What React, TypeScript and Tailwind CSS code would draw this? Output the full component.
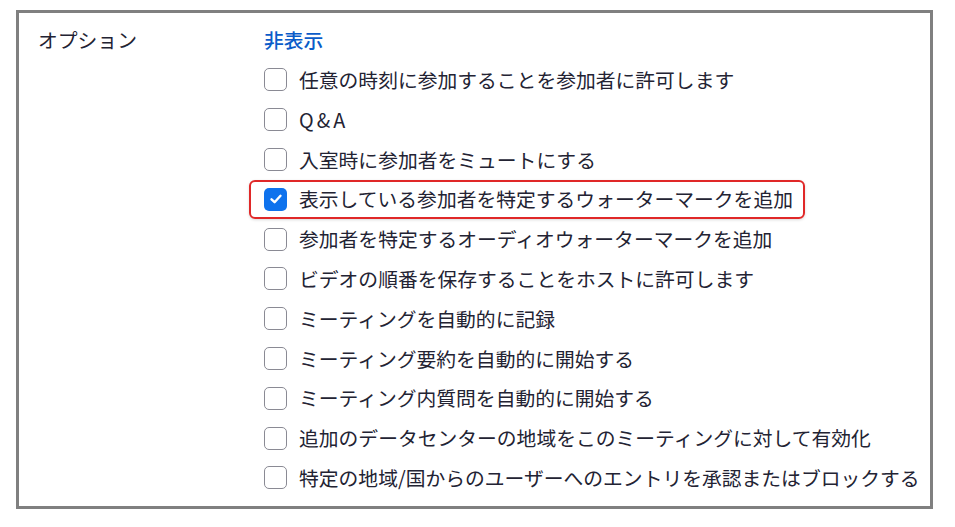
import React from 'react'

const options = [
  { label: '任意の時刻に参加することを参加者に許可します', checked: false },
  { label: 'Q&A', checked: false },
  { label: '入室時に参加者をミュートにする', checked: false },
  { label: '表示している参加者を特定するウォーターマークを追加', checked: true, highlight: true },
  { label: '参加者を特定するオーディオウォーターマークを追加', checked: false },
  { label: 'ビデオの順番を保存することをホストに許可します', checked: false },
  { label: 'ミーティングを自動的に記録', checked: false },
  { label: 'ミーティング要約を自動的に開始する', checked: false },
  { label: 'ミーティング内質問を自動的に開始する', checked: false },
  { label: '追加のデータセンターの地域をこのミーティングに対して有効化', checked: false },
  { label: '特定の地域/国からのユーザーへのエントリを承認またはブロックする', checked: false },
]

function Checkbox({ checked }: { checked: boolean }) {
  if (checked) {
    return (
      <span className="w-[23px] h-[23px] rounded-[5px] bg-[#0e72ed] flex items-center justify-center shrink-0">
        <svg width="14" height="14" viewBox="0 0 14 14" fill="none">
          <path d="M2.5 7.3 L5.6 10.2 L11.5 3.8" stroke="white" strokeWidth="2.4" strokeLinecap="round" strokeLinejoin="round" />
        </svg>
      </span>
    )
  }
  return <span className="w-[23px] h-[23px] rounded-[5px] border border-[#8a8a94] bg-white shrink-0" />
}

export default function App() {
  return (
    <div className="w-[955px] h-[527px] bg-white pt-[10px] pl-[16px]" style={{ fontFamily: '"Noto Sans CJK JP", "Noto Sans", sans-serif' }}>
      <div className="w-[917px] h-[499px] border-[3px] border-[#808080] flex pl-[19px] pt-[7px]">
        {/* ラベル */}
        <div className="w-[226px] shrink-0 h-[40px] flex items-center text-[19.8px] text-[#232333]">オプション</div>

        {/* オプション一覧 */}
        <div className="flex flex-col items-start">
          <div className="h-[40px] flex items-center text-[19.8px] text-[#0b5cc9] font-medium">非表示</div>
          {options.map((o) => (
            <div key={o.label} className="relative h-[39.8px] flex items-center gap-[12px] text-[19.8px] text-[#232333] whitespace-nowrap">
              {o.highlight && (
                <span className="absolute left-[-15px] right-[-12px] top-[1px] bottom-[0px] border-2 border-[#e02828] rounded-[6px] shadow-[0_1px_3px_rgba(0,0,0,0.15)]" />
              )}
              <Checkbox checked={o.checked} />
              <span className={o.label === 'Q&A' ? 'tracking-[3px]' : ''}>{o.label}</span>
            </div>
          ))}
        </div>
      </div>
    </div>
  )
}
